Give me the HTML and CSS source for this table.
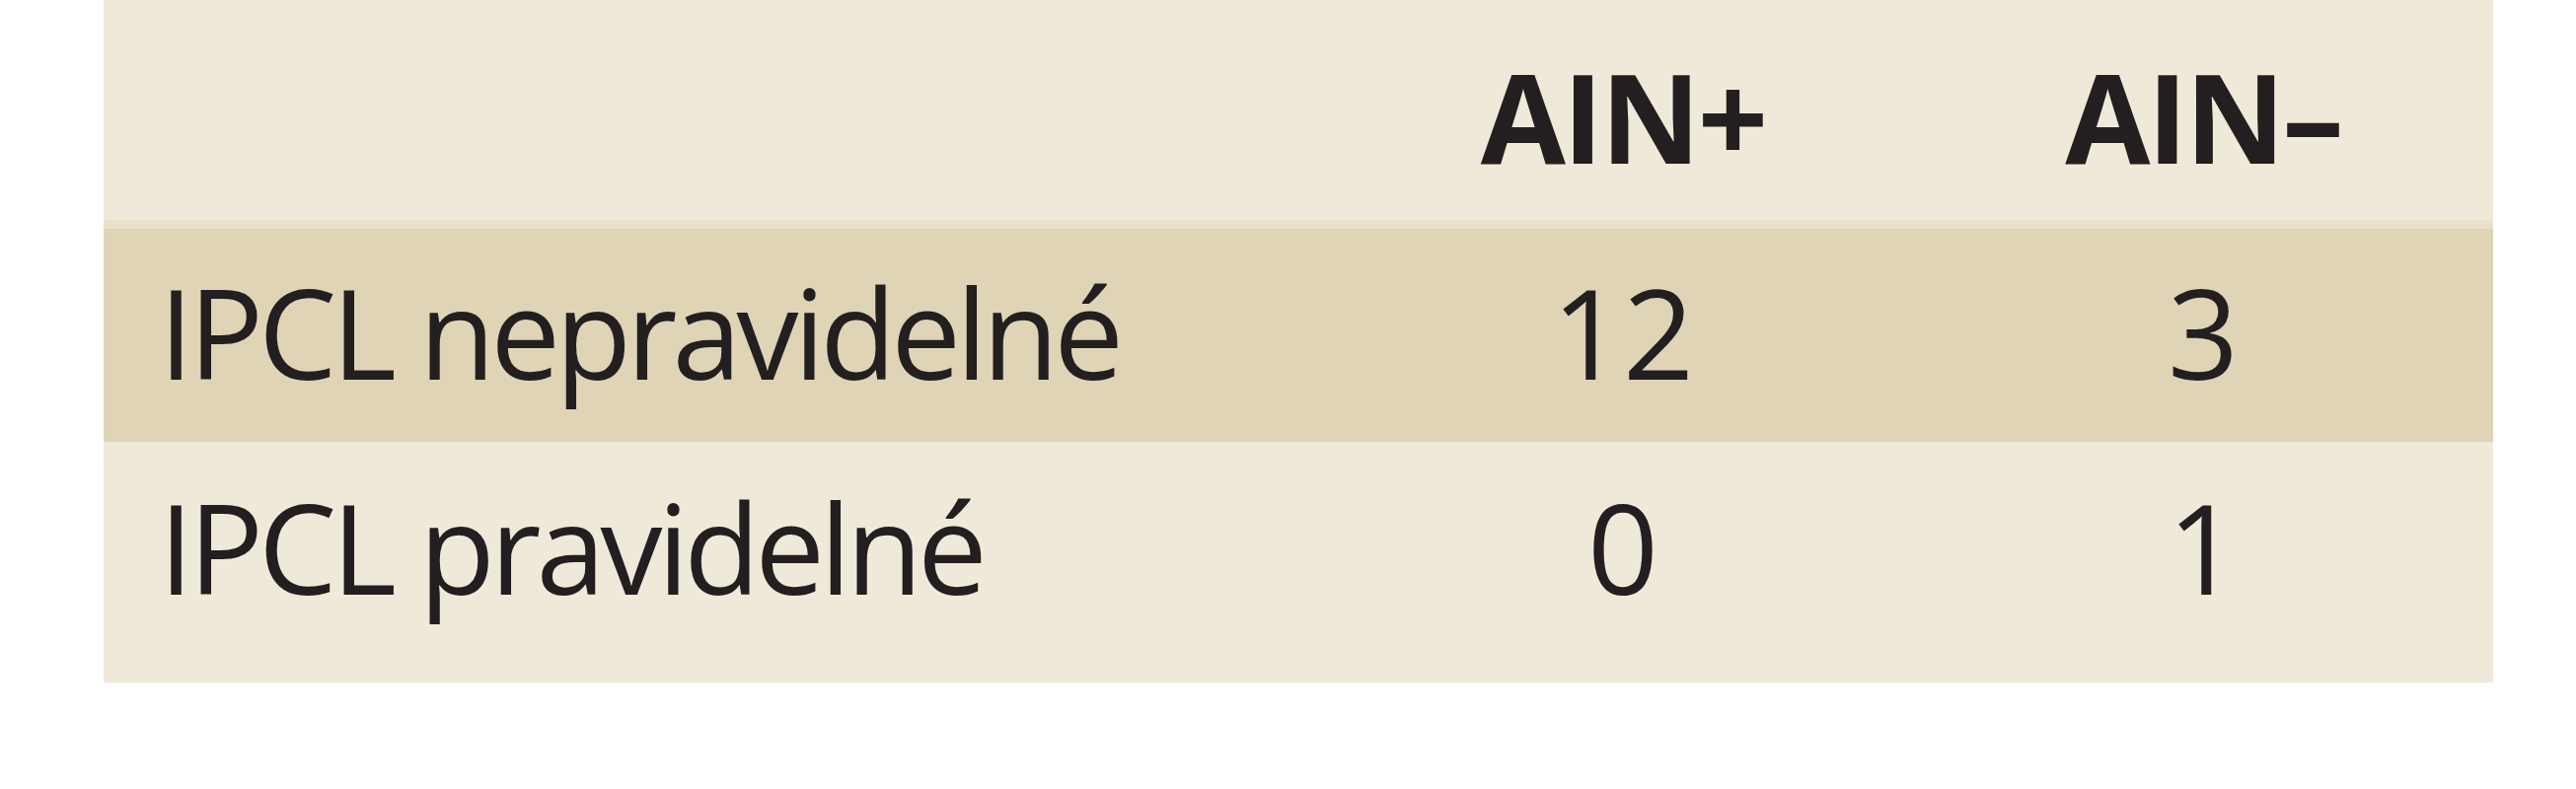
FILE: index.html
```html
<!DOCTYPE html>
<html lang="cs">
<head>
<meta charset="utf-8">
<title>IPCL a AIN</title>
<link rel="stylesheet" href="styles.css">
</head>
<body>
<div class="table">
  <div class="row head">
    <div class="cell label"></div>
    <div class="cell num">AIN+</div>
    <div class="cell num">AIN–</div>
  </div>
  <div class="sep"></div>
  <div class="row r1 shaded">
    <div class="cell label">IPCL nepravidelné</div>
    <div class="cell num">12</div>
    <div class="cell num">3</div>
  </div>
  <div class="row r2">
    <div class="cell label">IPCL pravidelné</div>
    <div class="cell num">0</div>
    <div class="cell num">1</div>
  </div>
</div>
</body>
</html>
```

FILE: styles.css
```css
html, body {
  margin: 0;
  padding: 0;
  background: #ffffff;
}
body {
  font-family: "Open Sans", "Noto Sans", sans-serif;
  color: #231f20;
}
.table {
  margin-left: 105px;
  width: 2422px;
  background: #efe9da;
}
.row {
  display: grid;
  grid-template-columns: 1240px 600px 576px 1fr;
  font-size: 126px;
  line-height: 172px;
}
.head {
  height: 223px;
  padding-top: 32px;
  box-sizing: border-box;
  font-weight: 700;
  font-size: 125px;
}
.sep {
  height: 9px;
  background: #e9e1c9;
}
.r1 {
  height: 216px;
  padding-top: 18px;
  box-sizing: border-box;
}
.r2 {
  height: 244px;
  padding-top: 20px;
  box-sizing: border-box;
}
.shaded {
  background: #dfd4b6;
}
.cell.label {
  padding-left: 56px;
  white-space: nowrap;
  letter-spacing: -5px;
}
.cell.num {
  text-align: center;
  white-space: nowrap;
}
.head .cell.num {
  letter-spacing: -3px;
}
```
